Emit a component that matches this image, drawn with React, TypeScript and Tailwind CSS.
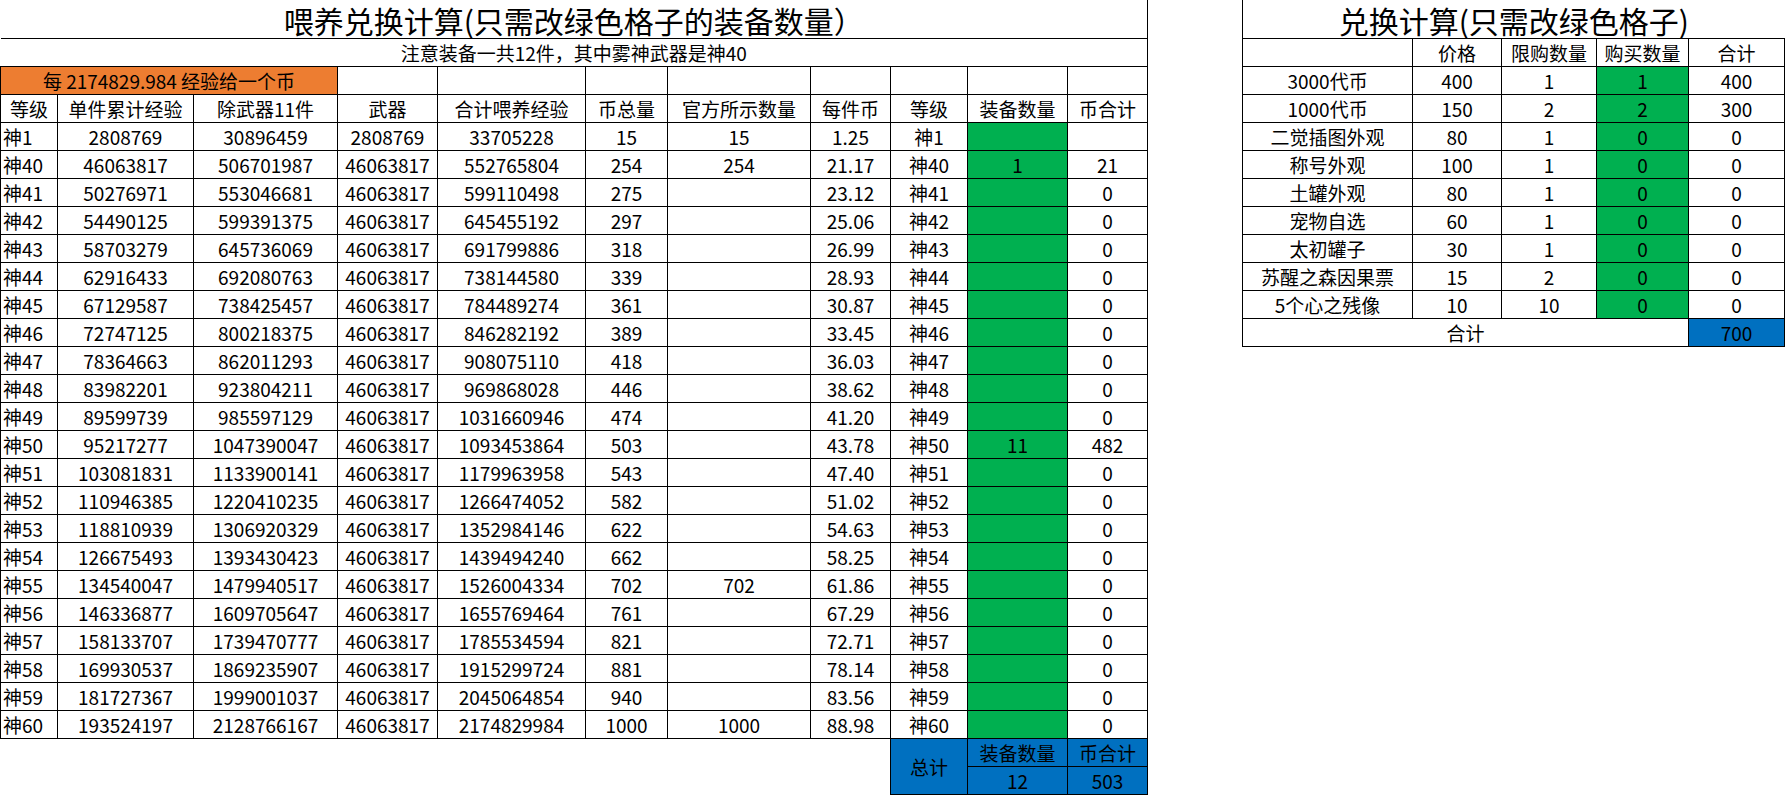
import React from 'react';

const font = { fontFamily: '"Noto Sans CJK SC", "Noto Sans", sans-serif' };

type Row = [string, string, string, string, string, string, string, string, string, string, string];

const rows: Row[] = [
    ['神1', '2808769', '30896459', '2808769', '33705228', '15', '15', '1.25', '神1', '', ''],
    ['神40', '46063817', '506701987', '46063817', '552765804', '254', '254', '21.17', '神40', '1', '21'],
    ['神41', '50276971', '553046681', '46063817', '599110498', '275', '', '23.12', '神41', '', '0'],
    ['神42', '54490125', '599391375', '46063817', '645455192', '297', '', '25.06', '神42', '', '0'],
    ['神43', '58703279', '645736069', '46063817', '691799886', '318', '', '26.99', '神43', '', '0'],
    ['神44', '62916433', '692080763', '46063817', '738144580', '339', '', '28.93', '神44', '', '0'],
    ['神45', '67129587', '738425457', '46063817', '784489274', '361', '', '30.87', '神45', '', '0'],
    ['神46', '72747125', '800218375', '46063817', '846282192', '389', '', '33.45', '神46', '', '0'],
    ['神47', '78364663', '862011293', '46063817', '908075110', '418', '', '36.03', '神47', '', '0'],
    ['神48', '83982201', '923804211', '46063817', '969868028', '446', '', '38.62', '神48', '', '0'],
    ['神49', '89599739', '985597129', '46063817', '1031660946', '474', '', '41.20', '神49', '', '0'],
    ['神50', '95217277', '1047390047', '46063817', '1093453864', '503', '', '43.78', '神50', '11', '482'],
    ['神51', '103081831', '1133900141', '46063817', '1179963958', '543', '', '47.40', '神51', '', '0'],
    ['神52', '110946385', '1220410235', '46063817', '1266474052', '582', '', '51.02', '神52', '', '0'],
    ['神53', '118810939', '1306920329', '46063817', '1352984146', '622', '', '54.63', '神53', '', '0'],
    ['神54', '126675493', '1393430423', '46063817', '1439494240', '662', '', '58.25', '神54', '', '0'],
    ['神55', '134540047', '1479940517', '46063817', '1526004334', '702', '702', '61.86', '神55', '', '0'],
    ['神56', '146336877', '1609705647', '46063817', '1655769464', '761', '', '67.29', '神56', '', '0'],
    ['神57', '158133707', '1739470777', '46063817', '1785534594', '821', '', '72.71', '神57', '', '0'],
    ['神58', '169930537', '1869235907', '46063817', '1915299724', '881', '', '78.14', '神58', '', '0'],
    ['神59', '181727367', '1999001037', '46063817', '2045064854', '940', '', '83.56', '神59', '', '0'],
    ['神60', '193524197', '2128766167', '46063817', '2174829984', '1000', '1000', '88.98', '神60', '', '0'],
];

const headers = ['等级', '单件累计经验', '除武器11件', '武器', '合计喂养经验', '币总量', '官方所示数量', '每件币', '等级', '装备数量', '币合计'];
const widths = [57, 136, 144, 100, 148, 82, 143, 80, 77, 100, 80];

const shop: [string, string, string, string, string][] = [
    ['3000代币', '400', '1', '1', '400'],
    ['1000代币', '150', '2', '2', '300'],
    ['二觉插图外观', '80', '1', '0', '0'],
    ['称号外观', '100', '1', '0', '0'],
    ['土罐外观', '80', '1', '0', '0'],
    ['宠物自选', '60', '1', '0', '0'],
    ['太初罐子', '30', '1', '0', '0'],
    ['苏醒之森因果票', '15', '2', '0', '0'],
    ['5个心之残像', '10', '10', '0', '0'],
];

const td = 'border border-black p-0 text-center whitespace-nowrap overflow-hidden h-[28px] leading-none';

export default function App() {
    return (
        <div className="flex items-start bg-white w-[1785px] h-[796px] overflow-hidden text-[19px] text-black" style={font}>
            <table className="table-fixed border-collapse w-[1147px]">
                <colgroup>
                    {widths.map((w, i) => <col key={i} style={{ width: w }} />)}
                </colgroup>
                <tbody>
                    <tr>
                        <td colSpan={11} className="border-b border-r border-black h-[38px] text-center text-[30px] leading-[36px] p-0 pt-0.5">
                            喂养兑换计算(只需改绿色格子的装备数量）
                        </td>
                    </tr>
                    <tr>
                        <td colSpan={11} className={`${td} border-l-0`}>注意装备一共12件，其中雾神武器是神40</td>
                    </tr>
                    <tr>
                        <td colSpan={3} className={`${td} bg-[#ed7d31]`}>每 2174829.984 经验给一个币</td>
                        {Array.from({ length: 8 }).map((_, i) => <td key={i} className={td} />)}
                    </tr>
                    <tr>
                        {headers.map((h, i) => <td key={i} className={td}>{h}</td>)}
                    </tr>
                    {rows.map((r) => (
                        <tr key={r[0]}>
                            {r.map((c, i) => (
                                <td key={i} className={`${td} ${i === 9 ? 'bg-[#00b050]' : ''} ${i === 0 ? 'text-left pl-0.5' : ''}`}>{c}</td>
                            ))}
                        </tr>
                    ))}
                    <tr>
                        <td colSpan={8} className="p-0 h-[28px]" />
                        <td rowSpan={2} className={`${td} bg-[#0070c0]`}>总计</td>
                        <td className={`${td} bg-[#0070c0]`}>装备数量</td>
                        <td className={`${td} bg-[#0070c0]`}>币合计</td>
                    </tr>
                    <tr>
                        <td colSpan={8} className="p-0 h-[28px]" />
                        <td className={`${td} bg-[#0070c0]`}>12</td>
                        <td className={`${td} bg-[#0070c0]`}>503</td>
                    </tr>
                </tbody>
            </table>

            <table className="table-fixed border-collapse w-[542px] ml-[94px]">
                <colgroup>
                    <col style={{ width: 170 }} />
                    <col style={{ width: 89 }} />
                    <col style={{ width: 95 }} />
                    <col style={{ width: 92 }} />
                    <col style={{ width: 96 }} />
                </colgroup>
                <tbody>
                    <tr>
                        <td colSpan={5} className="border-l border-b border-black h-[38px] text-center text-[30px] leading-[36px] p-0 pt-0.5">
                            兑换计算(只需改绿色格子)
                        </td>
                    </tr>
                    <tr>
                        <td className={td} />
                        <td className={td}>价格</td>
                        <td className={td}>限购数量</td>
                        <td className={td}>购买数量</td>
                        <td className={td}>合计</td>
                    </tr>
                    {shop.map((s) => (
                        <tr key={s[0]}>
                            {s.map((c, i) => (
                                <td key={i} className={`${td} ${i === 3 ? 'bg-[#00b050]' : ''}`}>{c}</td>
                            ))}
                        </tr>
                    ))}
                    <tr>
                        <td colSpan={4} className={td}>合计</td>
                        <td className={`${td} bg-[#0070c0]`}>700</td>
                    </tr>
                </tbody>
            </table>
        </div>
    );
}
